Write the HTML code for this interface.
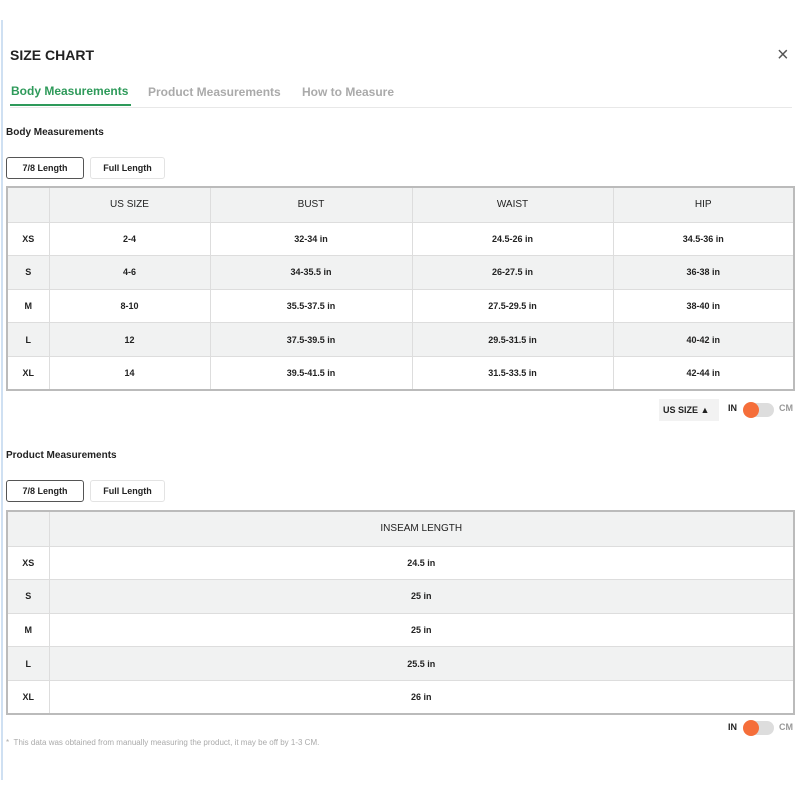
<!DOCTYPE html>
<html><head><style>
*{margin:0;padding:0;box-sizing:border-box}
body{width:800px;height:800px;background:#fff;font-family:"Liberation Sans",sans-serif;color:#222;position:relative;overflow:hidden}
.a{position:absolute}
.t{font-size:10px;font-weight:bold;}
table{position:absolute;border-collapse:collapse;border:2px solid #bbb;font-size:9px;font-weight:bold;color:#222}
td{border:1px solid #ddd;text-align:center;height:33.6px}
tr:nth-child(odd) td{background:#f1f2f2}
tr:first-child td{font-size:10px;font-weight:normal;height:35px}
.btn{position:absolute;height:22px;font-size:9px;font-weight:bold;display:flex;align-items:center;justify-content:center;border:1px solid #e3e3e3;border-radius:3px}
.btn.on{border:1.5px solid #555}
.tg{position:absolute;width:30px;height:14px;border-radius:7px;background:#ddd}
.tg:before{content:"";position:absolute;left:-1px;top:-1px;width:16px;height:16px;border-radius:50%;background:#f56e3a}
</style></head><body>
<div class="a" style="left:1px;top:20px;width:2px;height:760px;background:#cfe0f2"></div>
<div class="a" style="left:10px;top:47px;font-size:14px;font-weight:bold;color:#222">SIZE CHART</div>
<div class="a" style="left:777px;top:44px;font-size:20px;color:#555">×</div>
<div class="a t" style="left:11px;top:84px;font-size:12px;color:#2e9a5a">Body Measurements</div>
<div class="a" style="left:10px;top:104px;width:121px;height:2px;background:#2e9a5a"></div>
<div class="a t" style="left:148px;top:85px;font-size:12px;color:#aaa">Product Measurements</div>
<div class="a t" style="left:302px;top:85px;font-size:12px;color:#aaa">How to Measure</div>
<div class="a" style="left:10px;top:107px;width:782px;height:1px;background:#e8e8e8"></div>
<div class="a t" style="left:6px;top:127px">Body Measurements</div>
<div class="btn on" style="left:6px;top:157px;width:78px">7/8 Length</div>
<div class="btn" style="left:90px;top:157px;width:75px">Full Length</div>
<table style="left:6px;top:186px;width:789px">
<tr><td style="width:42px"></td><td style="width:161px">US SIZE</td><td style="width:202px">BUST</td><td style="width:201px">WAIST</td><td>HIP</td></tr>
<tr><td>XS</td><td>2-4</td><td>32-34 in</td><td>24.5-26 in</td><td>34.5-36 in</td></tr>
<tr><td>S</td><td>4-6</td><td>34-35.5 in</td><td>26-27.5 in</td><td>36-38 in</td></tr>
<tr><td>M</td><td>8-10</td><td>35.5-37.5 in</td><td>27.5-29.5 in</td><td>38-40 in</td></tr>
<tr><td>L</td><td>12</td><td>37.5-39.5 in</td><td>29.5-31.5 in</td><td>40-42 in</td></tr>
<tr><td>XL</td><td>14</td><td>39.5-41.5 in</td><td>31.5-33.5 in</td><td>42-44 in</td></tr>
</table>
<div class="a t" style="left:659px;top:399px;width:60px;height:22px;background:#f2f2f2;font-size:9px;padding:6px 4px">US SIZE ▲</div>
<div class="a t" style="left:728px;top:403px;font-size:9px">IN</div>
<div class="tg" style="left:744px;top:403px"></div>
<div class="a t" style="left:779px;top:403px;font-size:9px;color:#999">CM</div>
<div class="a t" style="left:6px;top:450px">Product Measurements</div>
<div class="btn on" style="left:6px;top:480px;width:78px">7/8 Length</div>
<div class="btn" style="left:90px;top:480px;width:75px">Full Length</div>
<table style="left:6px;top:510px;width:789px">
<tr><td style="width:42px"></td><td>INSEAM LENGTH</td></tr>
<tr><td>XS</td><td>24.5 in</td></tr>
<tr><td>S</td><td>25 in</td></tr>
<tr><td>M</td><td>25 in</td></tr>
<tr><td>L</td><td>25.5 in</td></tr>
<tr><td>XL</td><td>26 in</td></tr>
</table>
<div class="a t" style="left:728px;top:722px;font-size:9px">IN</div>
<div class="tg" style="left:744px;top:721px"></div>
<div class="a t" style="left:779px;top:722px;font-size:9px;color:#999">CM</div>
<div class="a" style="left:6px;top:738px;font-size:8px;color:#aaa">* &nbsp;This data was obtained from manually measuring the product, it may be off by 1-3 CM.</div>
</body></html>
